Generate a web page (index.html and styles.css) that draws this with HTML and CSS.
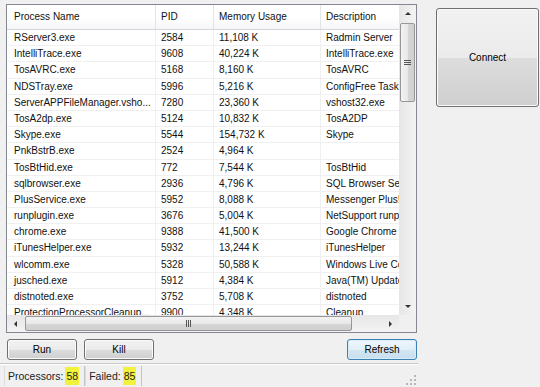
FILE: index.html
```html
<!DOCTYPE html>
<html lang="en">
<head>
  <meta charset="UTF-8">
  <title>Process Monitor</title>
  <link rel="stylesheet" href="styles.css">
</head>
<body>
  <div class="app">
    <div class="main">
      <!-- Process list -->
      <div class="list">
        <div class="list-view">
          <div class="row head">
            <div class="cell">Process Name</div>
            <div class="cell">PID</div>
            <div class="cell">Memory Usage</div>
            <div class="cell">Description</div>
          </div>
          <div class="row"><div class="cell">RServer3.exe</div><div class="cell">2584</div><div class="cell">11,108 K</div><div class="cell">Radmin Server</div></div>
          <div class="row"><div class="cell">IntelliTrace.exe</div><div class="cell">9608</div><div class="cell">40,224 K</div><div class="cell">IntelliTrace.exe</div></div>
          <div class="row"><div class="cell">TosAVRC.exe</div><div class="cell">5168</div><div class="cell">8,160 K</div><div class="cell">TosAVRC</div></div>
          <div class="row"><div class="cell">NDSTray.exe</div><div class="cell">5996</div><div class="cell">5,216 K</div><div class="cell">ConfigFree Task Tray</div></div>
          <div class="row"><div class="cell">ServerAPPFileManager.vsho...</div><div class="cell">7280</div><div class="cell">23,360 K</div><div class="cell">vshost32.exe</div></div>
          <div class="row"><div class="cell">TosA2dp.exe</div><div class="cell">5124</div><div class="cell">10,832 K</div><div class="cell">TosA2DP</div></div>
          <div class="row"><div class="cell">Skype.exe</div><div class="cell">5544</div><div class="cell">154,732 K</div><div class="cell">Skype</div></div>
          <div class="row"><div class="cell">PnkBstrB.exe</div><div class="cell">2524</div><div class="cell">4,964 K</div><div class="cell"></div></div>
          <div class="row"><div class="cell">TosBtHid.exe</div><div class="cell">772</div><div class="cell">7,544 K</div><div class="cell">TosBtHid</div></div>
          <div class="row"><div class="cell">sqlbrowser.exe</div><div class="cell">2936</div><div class="cell">4,796 K</div><div class="cell">SQL Browser Service</div></div>
          <div class="row"><div class="cell">PlusService.exe</div><div class="cell">5952</div><div class="cell">8,088 K</div><div class="cell">Messenger Plus! Service</div></div>
          <div class="row"><div class="cell">runplugin.exe</div><div class="cell">3676</div><div class="cell">5,004 K</div><div class="cell">NetSupport runplugin</div></div>
          <div class="row"><div class="cell">chrome.exe</div><div class="cell">9388</div><div class="cell">41,500 K</div><div class="cell">Google Chrome</div></div>
          <div class="row"><div class="cell">iTunesHelper.exe</div><div class="cell">5932</div><div class="cell">13,244 K</div><div class="cell">iTunesHelper</div></div>
          <div class="row"><div class="cell">wlcomm.exe</div><div class="cell">5328</div><div class="cell">50,588 K</div><div class="cell">Windows Live Communications</div></div>
          <div class="row"><div class="cell">jusched.exe</div><div class="cell">5912</div><div class="cell">4,384 K</div><div class="cell">Java(TM) Update Scheduler</div></div>
          <div class="row"><div class="cell">distnoted.exe</div><div class="cell">3752</div><div class="cell">5,708 K</div><div class="cell">distnoted</div></div>
          <div class="row"><div class="cell">ProtectionProcessorCleanup...</div><div class="cell">9900</div><div class="cell">4,348 K</div><div class="cell">Cleanup</div></div>
        </div>

        <!-- Vertical scrollbar -->
        <div class="vscroll">
          <div class="arrow"><span class="tri up"></span></div>
          <div class="track">
            <div class="thumb v-thumb"><span class="grip v-grip"></span></div>
          </div>
          <div class="arrow"><span class="tri down"></span></div>
        </div>

        <!-- Horizontal scrollbar -->
        <div class="hscroll">
          <div class="arrow"><span class="tri left"></span></div>
          <div class="track">
            <div class="thumb h-thumb"><span class="grip h-grip"></span></div>
          </div>
          <div class="arrow"><span class="tri right"></span></div>
        </div>
        <div class="corner"></div>
      </div>

      <!-- Actions -->
      <div class="actions">
        <button class="btn">Run</button>
        <button class="btn">Kill</button>
        <button class="btn btn-default">Refresh</button>
      </div>

      <!-- Status bar -->
      <div class="status">
        <div class="panel">Processors: <span class="mark">58</span></div>
        <div class="panel">Failed: <span class="mark">85</span></div>
        <div class="status-fill"></div>
        <svg class="sizer" width="10" height="10" viewBox="0 0 10 10">
          <rect x="8" y="0" width="2" height="2" fill="#b8b8b8"/>
          <rect x="4" y="4" width="2" height="2" fill="#b8b8b8"/>
          <rect x="8" y="4" width="2" height="2" fill="#b8b8b8"/>
          <rect x="0" y="8" width="2" height="2" fill="#b8b8b8"/>
          <rect x="4" y="8" width="2" height="2" fill="#b8b8b8"/>
          <rect x="8" y="8" width="2" height="2" fill="#b8b8b8"/>
        </svg>
      </div>
    </div>

    <div class="side">
      <button class="btn connect">Connect</button>
    </div>
  </div>
</body>
</html>
```

FILE: styles.css
```css
/* Reset minimal */
* { box-sizing: border-box; margin: 0; padding: 0; }

body {
  font-family: 'Liberation Sans', Arial, sans-serif;
  font-size: 10px;
  background: #f0f0f0;
  color: #111;
  width: 540px;
  height: 387px;
  overflow: hidden;
}

.app {
  display: flex;
  height: 387px;
}

.main {
  width: 418px;
  display: flex;
  flex-direction: column;
}

/* Liste des processus */
.list {
  margin: 4px 0 0 6px;
  width: 411px;
  height: 329px;
  border: 1px solid #828790;
  background: #fff;
  display: grid;
  grid-template-columns: 392px 17px;
  grid-template-rows: 310px 17px;
}
.list-view {
  overflow: hidden;
  white-space: nowrap;
}
.row {
  display: grid;
  grid-template-columns: 149px 58px 107px 160px;
  height: 16.2px;
  line-height: 15px;
  border-bottom: 1px solid #f0f0f0;
}
.cell {
  overflow: hidden;
  padding-left: 5px;
  border-right: 1px solid #f0f0f0;
}
.cell:first-child {
  padding-left: 7px;
}
.row.head {
  height: 25px;
  line-height: 24px;
  background: linear-gradient(#ffffff, #ffffff 55%, #f5f6f8);
  border-bottom: 1px solid #d5d5d5;
}
.row.head .cell {
  border-right-color: #e3e4e6;
}

/* Barres de défilement */
.vscroll, .hscroll {
  display: flex;
  background: linear-gradient(to right, #e6e6e6, #f3f3f3);
}
.vscroll {
  flex-direction: column;
}
.hscroll {
  background: linear-gradient(#e6e6e6, #f3f3f3);
}
.arrow {
  flex: 0 0 17px;
  display: flex;
  align-items: center;
  justify-content: center;
}
.track {
  flex: 1;
  display: flex;
  padding: 1px;
}
.vscroll .track { flex-direction: column; }
.thumb {
  border: 1px solid #979797;
  border-radius: 2px;
  display: flex;
  align-items: center;
  justify-content: center;
}
.v-thumb {
  height: 79px;
  background: linear-gradient(to right, #f3f3f3, #e8e8e8 50%, #d6d6d6 51%, #d0d0d0);
}
.h-thumb {
  width: 327px;
  background: linear-gradient(#f3f3f3, #e8e8e8 50%, #d6d6d6 51%, #d0d0d0);
}
.grip {
  display: block;
}
.v-grip {
  width: 7px;
  height: 5px;
  border-top: 1px solid #555;
  border-bottom: 1px solid #555;
  background: linear-gradient(transparent 1px, #555 1px, #555 2px, transparent 2px);
}
.h-grip {
  width: 5px;
  height: 7px;
  border-left: 1px solid #555;
  border-right: 1px solid #555;
  background: linear-gradient(to right, transparent 1px, #555 1px, #555 2px, transparent 2px);
}
.tri {
  width: 0;
  height: 0;
  border: 3px solid transparent;
}
.tri.up { border-bottom: 3px solid #333; border-top-width: 0; }
.tri.down { border-top: 3px solid #333; border-bottom-width: 0; }
.tri.left { border-right: 3px solid #333; border-left-width: 0; }
.tri.right { border-left: 3px solid #333; border-right-width: 0; }
.corner {
  background: #f0f0f0;
}

/* Boutons */
.actions {
  display: flex;
  gap: 7px;
  padding: 0 1px 0 7px;
  margin-top: 6px;
}
.btn {
  font-family: inherit;
  font-size: 10px;
  color: #000;
  width: 70px;
  height: 21px;
  border: 1px solid #707070;
  border-radius: 3px;
  box-shadow: inset 0 0 0 1px #fbfbfb;
  background: linear-gradient(#f2f2f2, #ebebeb 50%, #dddddd 51%, #cfcfcf);
}
.btn-default {
  margin-left: auto;
  border-color: #3c7fb1;
  box-shadow: inset 0 0 0 1px #d6eefa;
  background: linear-gradient(#eef6fb, #e2eff7 50%, #d2e5f1 51%, #c8def0);
}
.connect {
  width: 103px;
  height: 99px;
  padding-bottom: 1px;
}

/* Barre d'état */
.status {
  margin-top: 3px;
  height: 24px;
  border-top: 1px solid #c8c8c8;
  display: flex;
  align-items: stretch;
  padding: 2px 0 1px 4px;
  box-shadow: inset 0 1px 0 #fff;
}
.panel {
  display: flex;
  align-items: center;
  gap: 2px;
  padding: 0 5px 0 3px;
  border-left: 1px solid #dcdcdc;
  border-right: 1px solid #c4c4c4;
  font-size: 10.5px;
  color: #222;
}
.mark {
  background: #f2f23c;
  padding: 3px 1px;
}
.status-fill {
  flex: 1;
}
.sizer {
  align-self: flex-end;
  margin: 0 2px 1px 0;
}

.side {
  padding: 8px 0 0 18px;
}
```
